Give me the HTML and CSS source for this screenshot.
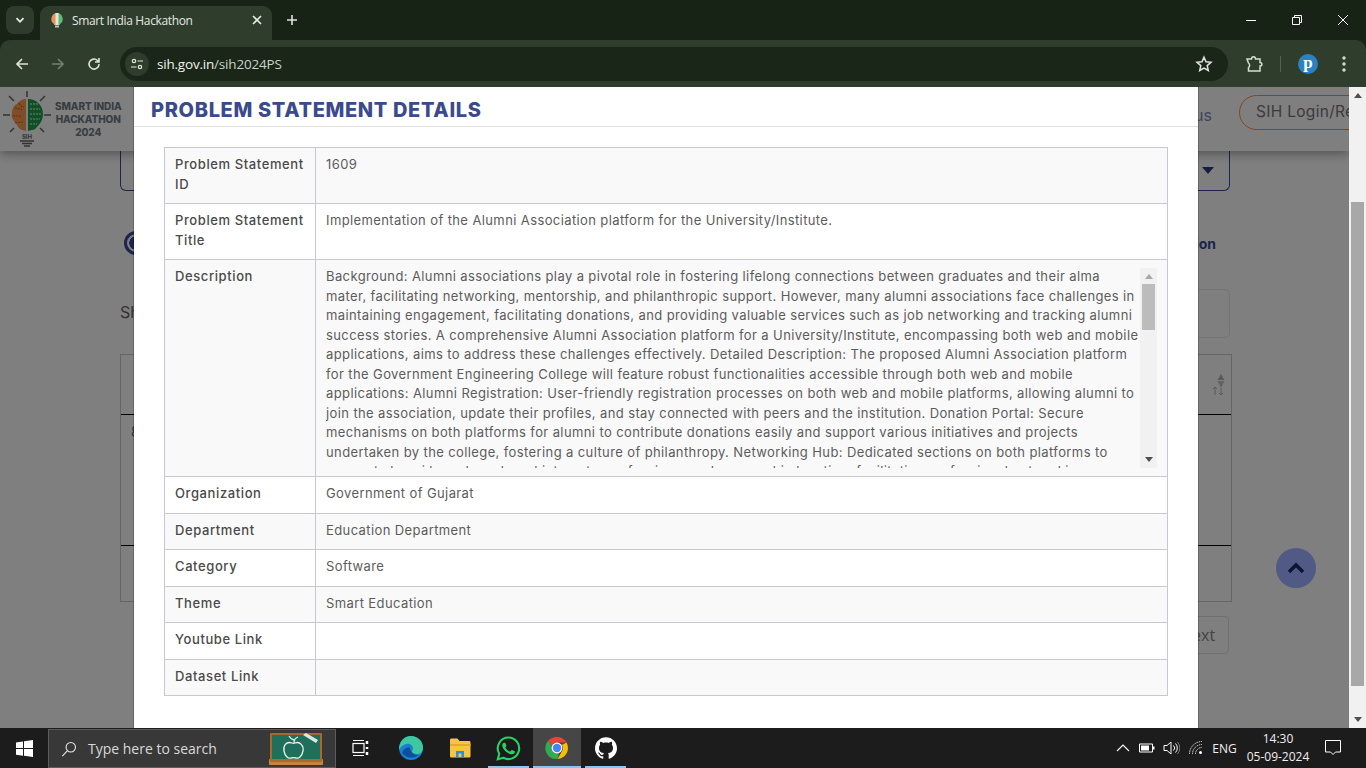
FILE: index.html
```html
<!DOCTYPE html>
<html lang="en">
<head>
    <meta charset="UTF-8">
    <meta name="viewport" content="width=device-width, initial-scale=1.0">
    <title>Smart India Hackathon</title>
    <link rel="stylesheet" href="styles.css">
</head>
<body>
    <div class="tabstrip">
        <div class="tab-search">
            <svg width="12" height="12" viewBox="0 0 12 12"><path d="M2.5 4.2 6 7.8l3.5-3.6" fill="none" stroke="#e6ece4" stroke-width="1.8"/></svg>
        </div>
        <div class="tab">
            <svg class="favicon" width="14" height="16" viewBox="0 0 14 16">
                <path d="M7 1a6 6 0 0 0-3 11v1h3z" fill="#e8925a"/>
                <path d="M7 1a6 6 0 0 1 3 11v1H7z" fill="#63b878"/>
                <rect x="5.5" y="1" width="3" height="12" fill="#dfe8dc"/>
                <rect x="5" y="13.5" width="4" height="2" fill="#b9c4b6"/>
            </svg>
            <span class="tab-title">Smart India Hackathon</span>
            <svg class="tab-close" width="10" height="10" viewBox="0 0 10 10"><path d="M1 1l8 8M9 1l-8 8" stroke="#e6ece4" stroke-width="1.6"/></svg>
        </div>
        <svg class="new-tab" width="12" height="12" viewBox="0 0 12 12"><path d="M6 1v10M1 6h10" stroke="#dfe6dc" stroke-width="1.6"/></svg>
        <div class="win-controls">
            <svg width="12" height="12" viewBox="0 0 12 12"><path d="M1 6.5h10" stroke="#fff" stroke-width="1"/></svg>
            <svg width="12" height="12" viewBox="0 0 12 12"><path d="M3.5 3V1.5h7v7H9M1.5 3.5h7v7h-7z" fill="none" stroke="#fff" stroke-width="1"/></svg>
            <svg width="12" height="12" viewBox="0 0 12 12"><path d="M1 1l10 10M11 1 1 11" stroke="#fff" stroke-width="1"/></svg>
        </div>
    </div>

    <div class="toolbar">
        <svg class="nav-icon" width="16" height="16" viewBox="0 0 16 16"><path d="M14 8H3M8 3 3 8l5 5" fill="none" stroke="#dbe3d8" stroke-width="1.7"/></svg>
        <svg class="nav-icon" width="16" height="16" viewBox="0 0 16 16"><path d="M2 8h11M8 3l5 5-5 5" fill="none" stroke="#74806f" stroke-width="1.7"/></svg>
        <svg class="nav-icon" width="16" height="16" viewBox="0 0 16 16"><path d="M13 8a5 5 0 1 1-1.500-3.500L13 6M13 2v4H9" fill="none" stroke="#dbe3d8" stroke-width="1.6"/></svg>
        <div class="omnibox">
            <div class="site-info">
                <svg width="14" height="14" viewBox="0 0 14 14" fill="none" stroke="#dfe6dc" stroke-width="1.2"><circle cx="4" cy="4" r="1.7"/><path d="M7.5 4H13M1 10h5.5"/><circle cx="10" cy="10" r="1.7"/></svg>
            </div>
            <span class="url"><span class="url-host">sih.gov.in</span>/sih2024PS</span>
            <svg class="star" width="18" height="18" viewBox="0 0 18 18"><path d="m9 2.2 2 4.600 5 .5-3.800 3.300 1.100 4.900L9 13l-4.300 2.500 1.100-4.900L2 7.300l5-.5z" fill="none" stroke="#dfe6dc" stroke-width="1.5"/></svg>
        </div>
        <svg class="ext-icon" width="18" height="18" viewBox="0 0 18 18"><path d="M2 4h4.500c0-3 4-3 4 0H15v3.500c2.500 0 2.500 3.500 0 3.500v5H3.500v-3.500c1.500-1 1.500-3.500 0-4.500L2 4z" fill="none" stroke="#d3e0cd" stroke-width="1.5"/></svg>
        <div class="tool-divider"></div>
        <div class="avatar">p</div>
        <svg class="menu-dots" width="4" height="16" viewBox="0 0 4 16" fill="#d3e0cd"><circle cx="2" cy="2" r="1.7"/><circle cx="2" cy="8" r="1.7"/><circle cx="2" cy="14" r="1.7"/></svg>
    </div>

    <div class="viewport">
        <div class="page">
            <header class="site-header">
                <div class="logo">
                    <svg width="48" height="58" viewBox="0 0 48 58">
                        <path d="M24 1v6M6 6l5 5M42 6l-5 5M0 25h7M41 25h7M7 42l4-4M41 42l-4-4" stroke="#666" stroke-width="1.5"/>
                        <path d="M23 9c-4 0-7 2-9 5-3 1-5 5-5 9-1 4 1 8 4 10 1 3 3 6 6 7l4 1z" fill="#ff9c50"/>
                        <path d="M12 18c3 1 5 0 7 2M10 26c4-1 6 1 9 0M12 33c3-1 5 0 8-1M16 13c1 3 3 4 5 4" fill="none" stroke="#c46a28" stroke-width="1.2" stroke-dasharray="2 1"/>
                        <path d="M25 9c8 0 15 6 15 15 0 7-4 11-7 14-1 1-2 2-4 2l-4 1z" fill="#21a04c"/>
                        <path d="M27 14h8M27 19h10M27 24h11M27 29h10M27 34h7" stroke="#a6e2b6" stroke-width="1.5" stroke-dasharray="2 1"/>
                        <text x="24" y="49" class="logo-sih">SIH</text>
                        <path d="M17 51h14M19 53.500h10M21 56h6" stroke="#666" stroke-width="1.5"/>
                    </svg>
                    <div class="logo-text">SMART INDIA<br>HACKATHON<br>2024</div>
                </div>
                <nav class="site-nav">
                    <a class="nav-link" href="#">Status</a>
                    <a class="login-btn" href="#">SIH Login/Register</a>
                </nav>
            </header>

            <div class="content">
                <div class="select-box"><span class="select-arrow"></span></div>
                <div class="section-row">
                    <span class="ring"></span>
                    <span class="section-link">Download Problem Statement Description</span>
                </div>
                <div class="show-row">
                    <span class="show-label">Show 10 entries</span>
                    <div class="search-input"></div>
                </div>
                <div class="ps-table">
                    <div class="ps-head">
                        <svg class="sort-icon" width="14" height="24" viewBox="0 0 14 24">
                            <path d="M3 22V14M1 16l2-2 2 2" fill="none" stroke="#b4b4b4" stroke-width="1"/>
                            <path d="M9 1 5.500 7h7z" fill="#b4b4b4"/>
                            <path d="M5.500 8h7L9 15z" fill="#c4c4c4"/>
                            <path d="M9 15v7M7 20l2 2 2-2" fill="none" stroke="#b4b4b4" stroke-width="1"/>
                        </svg>
                    </div>
                    <div class="ps-row">8</div>
                    <div class="ps-foot"></div>
                </div>
                <div class="pager"><a class="next-btn" href="#">Next</a></div>
            </div>

            <div class="backdrop"></div>
            <a class="to-top" href="#">
                <svg width="20" height="14" viewBox="0 0 20 14"><path d="M3 11 10 4l7 7" fill="none" stroke="#0b1536" stroke-width="3.5"/></svg>
            </a>

            <div class="modal">
                <div class="modal-header">
                    <h2 class="modal-title">PROBLEM STATEMENT DETAILS</h2>
                </div>
                <div class="modal-body">
                    <table class="details">
                        <tr>
                            <th>Problem Statement ID</th>
                            <td>1609</td>
                        </tr>
                        <tr>
                            <th>Problem Statement Title</th>
                            <td>Implementation of the Alumni Association platform for the University/Institute.</td>
                        </tr>
                        <tr>
                            <th>Description</th>
                            <td class="desc-cell">
                                <div class="desc-box">
                                    <div class="desc-text">
                                        Background: Alumni associations play a pivotal role in fostering lifelong connections between graduates and their alma<br>
                                        mater, facilitating networking, mentorship, and philanthropic support. However, many alumni associations face challenges in<br>
                                        maintaining engagement, facilitating donations, and providing valuable services such as job networking and tracking alumni<br>
                                        success stories. A comprehensive Alumni Association platform for a University/Institute, encompassing both web and mobile<br>
                                        applications, aims to address these challenges effectively. Detailed Description: The proposed Alumni Association platform<br>
                                        for the Government Engineering College will feature robust functionalities accessible through both web and mobile<br>
                                        applications: Alumni Registration: User-friendly registration processes on both web and mobile platforms, allowing alumni to<br>
                                        join the association, update their profiles, and stay connected with peers and the institution. Donation Portal: Secure<br>
                                        mechanisms on both platforms for alumni to contribute donations easily and support various initiatives and projects<br>
                                        undertaken by the college, fostering a culture of philanthropy. Networking Hub: Dedicated sections on both platforms to<br>
                                        connect alumni based on shared interests, professions, and geographic location, facilitating professional networking
                                    </div>
                                    <div class="desc-scroll">
                                        <span class="arrow-up"></span>
                                        <span class="desc-thumb"></span>
                                        <span class="arrow-down"></span>
                                    </div>
                                </div>
                            </td>
                        </tr>
                        <tr>
                            <th>Organization</th>
                            <td>Government of Gujarat</td>
                        </tr>
                        <tr>
                            <th>Department</th>
                            <td>Education Department</td>
                        </tr>
                        <tr>
                            <th>Category</th>
                            <td>Software</td>
                        </tr>
                        <tr>
                            <th>Theme</th>
                            <td>Smart Education</td>
                        </tr>
                        <tr>
                            <th>Youtube Link</th>
                            <td></td>
                        </tr>
                        <tr>
                            <th>Dataset Link</th>
                            <td></td>
                        </tr>
                    </table>
                </div>
            </div>
        </div>

        <div class="page-scroll">
            <span class="arrow-up dark"></span>
            <span class="page-thumb"></span>
            <span class="arrow-down dark"></span>
        </div>
    </div>

    <div class="taskbar">
        <div class="start">
            <svg width="17" height="17" viewBox="0 0 17 17" fill="#fff"><path d="M0 2.400 7 1.400v6.700H0zM8 1.300 17 0v8.100H8zM0 9h7v6.700L0 14.700zM8 9h9v8l-9-1.200z"/></svg>
        </div>
        <div class="search-box">
            <svg width="16" height="16" viewBox="0 0 18 18" fill="none" stroke="#e8e8e8" stroke-width="1.2"><circle cx="11" cy="7" r="5.300"/><path d="M7 11 1.500 17"/></svg>
            <span class="search-text">Type here to search</span>
            <svg class="board" width="56" height="34" viewBox="0 0 56 34">
                <rect x="1" y="27" width="54" height="6" fill="#c8843c" rx="1"/>
                <rect x="2" y="1" width="52" height="29" fill="#a86a2c" rx="1"/>
                <rect x="4" y="3" width="48" height="24" fill="#1f6f5c"/>
                <path d="M24 11c-6-2-9 3-8 8 1 5 4 8 7 7 2-.5 3-.5 5 0 3 1 6-2 7-7 1-5-3-10-8-8-1 .4-2 .4-3 0zM26 11c0-3 1-5 4-6M26 8c-2-.5-4-2-5-4" fill="none" stroke="#e8efe6" stroke-width="1.3"/>
                <path d="M35 3l3-2 12 7-2 3z" fill="#dfe6e2"/>
            </svg>
        </div>
        <div class="task-item task-view">
            <svg width="18" height="18" viewBox="0 0 18 18" fill="none" stroke="#fff" stroke-width="1.2"><path d="M1 1.500h11M1 16.500h11"/><rect x="1" y="4.500" width="11" height="9"/><path d="M15 2v3M15 8v2M15 13v3" stroke-width="2.5"/></svg>
        </div>
        <div class="task-item">
            <svg width="24" height="24" viewBox="0 0 24 24">
                <circle cx="12" cy="12" r="12" fill="#1a7fd0"/>
                <path d="M12 0a12 12 0 0 1 12 12c0 4-3 6-6 6-3 0-5-1-5-3 0-1 1-1 1-2.500C14 9 10 7 7 8c-3 1-6 3-7 6C0 6 5 0 12 0z" fill="#3ec8a0"/>
                <path d="M3 17c2-5 6-7 8-5 0 3 3 7 7 7 1 0 2 0 3-1a12 12 0 0 1-18-1z" fill="#0c4f9c"/>
            </svg>
        </div>
        <div class="task-item">
            <svg width="22" height="20" viewBox="0 0 22 20">
                <path d="M1 2c0-1 .5-1.500 1.500-1.500h6L10.500 3H20c1 0 1.500.5 1.500 1.500V18c0 1-.5 1.500-1.500 1.500H2.500C1.500 19.500 1 19 1 18z" fill="#f6c544"/>
                <path d="M1 6h20.500v2H1z" fill="#e8a82c"/>
                <path d="M7 19.500V13h8v6.500h-2.500V15.500h-3v4z" fill="#2a8ed8"/>
            </svg>
        </div>
        <div class="task-item open">
            <svg width="25" height="25" viewBox="0 0 24 24" fill="#25d366">
                <path d="M17.472 14.382c-.297-.149-1.758-.867-2.030-.967-.273-.099-.471-.148-.670.150-.197.297-.767.966-.940 1.164-.173.199-.347.223-.644.075-.297-.150-1.255-.463-2.390-1.475-.883-.788-1.480-1.761-1.653-2.059-.173-.297-.018-.458.130-.606.134-.133.298-.347.446-.520.149-.174.198-.298.298-.497.099-.198.050-.371-.025-.520-.075-.149-.669-1.612-.916-2.207-.242-.579-.487-.500-.669-.510-.173-.008-.371-.010-.570-.010-.198 0-.520.074-.792.372-.272.297-1.040 1.016-1.040 2.479 0 1.462 1.065 2.875 1.213 3.074.149.198 2.096 3.200 5.077 4.487.709.306 1.262.489 1.694.625.712.227 1.360.195 1.871.118.571-.085 1.758-.719 2.006-1.413.248-.694.248-1.289.173-1.413-.074-.124-.272-.198-.570-.347"/>
                <path d="M12 1.500a10.300 10.300 0 0 0-8.900 15.500L1.700 22.300l5.400-1.400A10.300 10.300 0 1 0 12 1.500z" fill="none" stroke="#25d366" stroke-width="2"/>
            </svg>
        </div>
        <div class="task-item active">
            <svg width="24" height="24" viewBox="0 0 24 24">
                <path d="M12 1a11 11 0 0 1 9.500 5.500H12a5.500 5.500 0 0 0-5.200 3.700L3.400 4.500A11 11 0 0 1 12 1z" fill="#ea4335"/>
                <path d="M21.500 6.500A11 11 0 0 1 12.500 23l4.200-7.300A5.500 5.500 0 0 0 16.800 9z" fill="#fbbc04"/>
                <path d="M12.500 23A11 11 0 0 1 3.400 4.500l4.200 7.300a5.500 5.500 0 0 0 6.300 5.500z" fill="#34a853"/>
                <circle cx="12" cy="12" r="5.400" fill="#fff"/>
                <circle cx="12" cy="12" r="4.200" fill="#4285f4"/>
            </svg>
        </div>
        <div class="task-item open">
            <svg width="22" height="22" viewBox="0 0 24 24" fill="#fff"><path d="M12 .297c-6.630 0-12 5.373-12 12 0 5.303 3.438 9.800 8.205 11.385.6.113.82-.258.82-.577 0-.285-.01-1.040-.015-2.040-3.338.724-4.042-1.610-4.042-1.610C4.422 18.070 3.633 17.700 3.633 17.700c-1.087-.744.084-.729.084-.729 1.205.084 1.838 1.236 1.838 1.236 1.070 1.835 2.809 1.305 3.495.998.108-.776.417-1.305.760-1.605-2.665-.3-5.466-1.332-5.466-5.930 0-1.310.465-2.380 1.235-3.220-.135-.303-.54-1.523.105-3.176 0 0 1.005-.322 3.300 1.230.96-.267 1.980-.399 3-.405 1.020.006 2.040.138 3 .405 2.280-1.552 3.285-1.230 3.285-1.230.645 1.653.24 2.873.12 3.176.765.840 1.230 1.910 1.230 3.220 0 4.610-2.805 5.625-5.475 5.920.42.360.81 1.096.81 2.220 0 1.606-.015 2.896-.015 3.286 0 .315.21.690.825.570C20.565 22.092 24 17.592 24 12.297c0-6.627-5.373-12-12-12"/></svg>
        </div>

        <div class="tray">
            <div class="tray-item w24"><svg width="14" height="8" viewBox="0 0 14 8"><path d="M1 7l6-6 6 6" fill="none" stroke="#fff" stroke-width="1.1"/></svg></div>
            <div class="tray-item w24"><svg width="16" height="10" viewBox="0 0 16 10"><path d="M.5 1h13v8H.5z" fill="none" stroke="#fff"/><rect x="2" y="2.500" width="8" height="5" fill="#fff"/><rect x="14" y="3.500" width="1.500" height="3" fill="#fff"/></svg></div>
            <div class="tray-item w24"><svg width="17" height="14" viewBox="0 0 17 14" fill="none" stroke="#fff"><path d="M1 4.500h3L8 1v12L4 9.500H1z"/><path d="M10.500 4.500a3.500 3.500 0 0 1 0 5M12.500 2.500a6.500 6.500 0 0 1 0 9"/><path d="M14.500 1a9 9 0 0 1 0 12" stroke="#777"/></svg></div>
            <div class="tray-item w26"><svg width="14" height="14" viewBox="0 0 14 14" fill="none" stroke="#ddd"><path d="M.5 13A12.500 12.500 0 0 1 13 .5M3.500 13A9.500 9.500 0 0 1 13 3.500M6.500 13A6.500 6.500 0 0 1 13 6.500" stroke-dasharray="1.5 .8"/><circle cx="11.500" cy="11.500" r="1.5" fill="#fff" stroke="none"/></svg></div>
            <div class="tray-lang">ENG</div>
            <div class="clock">14:30<br>05-09-2024</div>
            <div class="tray-item w34"><svg width="16" height="16" viewBox="0 0 16 16"><path d="M.5.500h15v11.500h-5L8 14.500 5.500 12h-5z" fill="none" stroke="#fff"/></svg></div>
        </div>
    </div>
</body>
</html>
```

FILE: styles.css
```css
* {
    margin: 0;
    padding: 0;
    box-sizing: border-box;
}

html, body {
    width: 1366px;
    height: 768px;
    overflow: hidden;
}

body {
    font-family: Inter, "Liberation Sans", sans-serif;
    background: #16241a;
    display: flex;
    flex-direction: column;
}

a {
    text-decoration: none;
    color: inherit;
}

/* browser frame */
.tabstrip {
    height: 40px;
    background: #172415;
    display: flex;
    align-items: flex-end;
    padding-left: 6px;
    flex-shrink: 0;
}

.tab-search {
    width: 28px;
    height: 28px;
    margin-bottom: 6px;
    border-radius: 8px;
    background: #2e3c2c;
    display: flex;
    align-items: center;
    justify-content: center;
}

.tab {
    width: 232px;
    height: 34px;
    margin-left: 6px;
    background: #2f3d2d;
    border-radius: 9px 9px 0 0;
    display: flex;
    align-items: center;
    padding: 0 10px 6px 10px;
}

.tab-title {
    font-family: "Open Sans", sans-serif;
    font-size: 12px;
    letter-spacing: -0.35px;
    color: #e3e8e1;
    margin-left: 8px;
    flex: 1;
}

.new-tab {
    margin: 0 0 14px 14px;
}

.win-controls {
    margin-left: auto;
    display: flex;
    gap: 34px;
    padding: 0 17px 14px 0;
}

.win-controls svg {
    display: block;
}

.toolbar {
    height: 47px;
    background: #2f3d2d;
    border-radius: 10px 10px 0 0;
    display: flex;
    align-items: center;
    padding: 0 14px;
    flex-shrink: 0;
}

.nav-icon {
    margin-right: 20px;
}

.omnibox {
    width: 1108px;
    height: 34px;
    margin-left: -2px;
    border-radius: 17px;
    background: #1a2618;
    display: flex;
    align-items: center;
    padding: 0 15px 0 5px;
}

.site-info {
    width: 24px;
    height: 24px;
    border-radius: 50%;
    background: #2f3d2d;
    display: flex;
    align-items: center;
    justify-content: center;
}

.url {
    font-family: "Open Sans", sans-serif;
    font-size: 13.5px;
    letter-spacing: -0.2px;
    color: #c9d2c6;
    margin-left: 8px;
    flex: 1;
}

.url-host {
    color: #f0f4ee;
}

.ext-icon {
    margin-left: 17px;
}

.tool-divider {
    width: 1px;
    height: 16px;
    background: #56644f;
    margin-left: 17px;
}

.avatar {
    width: 20px;
    height: 20px;
    margin-left: 17px;
    border-radius: 50%;
    background: #2a82c2;
    color: #fff;
    font-family: "Liberation Serif", serif;
    font-weight: bold;
    font-size: 17px;
    line-height: 17px;
    text-align: center;
}

.menu-dots {
    margin-left: 24px;
}

/* page area */
.viewport {
    height: 641px;
    display: flex;
    flex-shrink: 0;
}

.page {
    position: relative;
    width: 1349px;
    height: 641px;
    background: #fff;
    overflow: hidden;
}

.site-header {
    height: 64px;
    background: #fff;
    display: flex;
    align-items: center;
    justify-content: space-between;
    box-shadow: 0 3px 10px rgba(0,0,0,0.35);
    position: relative;
}

.logo {
    display: flex;
    align-items: center;
    padding-left: 3px;
    gap: 4px;
}

.logo-sih {
    font-size: 6px;
    font-weight: 700;
    text-anchor: middle;
    fill: #666;
}

.logo-text {
    font-size: 10px;
    font-weight: 800;
    letter-spacing: -0.1px;
    line-height: 13px;
    text-align: center;
    color: #6f7c86;
    white-space: nowrap;
}

.site-nav {
    display: flex;
    align-items: center;
    gap: 27px;
    margin-right: -78px;
    margin-top: -14px;
}

.nav-link {
    font-size: 16px;
    color: #7a8ac0;
    margin-top: 6px;
}

.login-btn {
    width: 188px;
    height: 35px;
    border: 1.5px solid #ff8f40;
    border-radius: 18px;
    font-size: 15.5px;
    letter-spacing: 0.3px;
    line-height: 32px;
    padding-left: 16px;
    color: #777;
    white-space: nowrap;
}

.content {
    padding-left: 120px;
    width: 1232px;
}

.select-box {
    width: 1110px;
    height: 40px;
    border: 1px solid #3a4a9c;
    border-top: none;
    border-radius: 0 0 6px 6px;
    display: flex;
    align-items: center;
    justify-content: flex-end;
    padding-right: 15px;
}

.select-arrow {
    border-left: 6px solid transparent;
    border-right: 6px solid transparent;
    border-top: 7px solid #2a3a8c;
}

.section-row {
    height: 30px;
    margin-top: 37px;
    display: flex;
    align-items: center;
    justify-content: space-between;
    width: 1096px;
}

.ring {
    width: 24px;
    height: 24px;
    margin-left: 4px;
    border: 3px solid #3a4a9c;
    border-radius: 50%;
    background: radial-gradient(circle, #3a4a9c 0 6.5px, transparent 7px);
}

.section-link {
    font-size: 14px;
    font-weight: 700;
    color: #3a4a9c;
    white-space: nowrap;
}

.show-row {
    height: 49px;
    width: 1110px;
    margin-top: 31px;
    display: flex;
    align-items: center;
    justify-content: space-between;
}

.show-label {
    font-size: 16px;
    color: #666;
    margin-bottom: 3px;
}

.search-input {
    width: 220px;
    height: 49px;
    border: 1px solid #e6e6e6;
    border-radius: 5px;
}

.ps-table {
    height: 248px;
    margin-top: 16px;
    border: 1px solid #ccc;
    display: flex;
    flex-direction: column;
}

.ps-head {
    height: 60px;
    border-bottom: 1px solid #000;
    display: flex;
    align-items: center;
    justify-content: flex-end;
    padding-right: 5px;
}

.ps-row {
    height: 131px;
    border-bottom: 1px solid #000;
    padding: 8px 10px;
    font-size: 14px;
    color: #666;
}

.pager {
    margin-top: 14px;
    width: 1109px;
    display: flex;
    justify-content: flex-end;
}

.next-btn {
    width: 80px;
    height: 38px;
    border: 1px solid #e0e0e0;
    border-radius: 4px;
    padding-left: 30px;
    font-family: "Open Sans", sans-serif;
    font-size: 16px;
    line-height: 36px;
    color: #888;
}

.backdrop {
    position: absolute;
    inset: 0;
    background: rgba(0,0,0,0.5);
}

.to-top {
    position: absolute;
    left: 1276px;
    top: 461px;
    width: 40px;
    height: 40px;
    border-radius: 50%;
    background: #505a85;
    display: flex;
    align-items: center;
    justify-content: center;
}

/* modal */
.modal {
    position: absolute;
    left: 134px;
    top: 0;
    width: 1064px;
    height: 641px;
    background: #fff;
    box-shadow: 0 0 0 1px rgba(0,0,0,0.2);
    overflow: hidden;
}

.modal-header {
    height: 40px;
    padding: 6px 0 0 17px;
    border-bottom: 1px solid #dee2e6;
    display: flex;
    align-items: center;
}

.modal-title {
    font-size: 20px;
    font-weight: 800;
    color: #3a4a8c;
    letter-spacing: 0.65px;
}

.modal-body {
    padding: 20px 30px 0;
}

.details {
    width: 1004px;
    table-layout: fixed;
    border-collapse: collapse;
    font-size: 13px;
    line-height: 19.5px;
}

.details th, .details td {
    border: 1px solid #c6c9d3;
    padding: 7px 10px 9px;
    vertical-align: top;
    text-align: left;
    height: 36.5px;
}

.details th {
    width: 151px;
    font-weight: 500;
    color: #4a4a4a;
    letter-spacing: 0.6px;
}

.details td {
    font-weight: 400;
    color: #5c5c5c;
    letter-spacing: 0.39px;
}

.details tr:nth-child(odd) {
    background: #f9f9f9;
}

.details .desc-cell {
    padding: 8px 10px;
}

.desc-box {
    height: 200px;
    display: flex;
    overflow: hidden;
}

.desc-text {
    width: 814px;
    margin-top: -1px;
    white-space: nowrap;
    overflow: hidden;
}

.desc-scroll {
    width: 17px;
    background: #f1f1f1;
    display: flex;
    flex-direction: column;
    align-items: center;
}

.desc-thumb {
    display: block;
    width: 13px;
    height: 46px;
    margin-top: 5px;
    background: #bcbcbc;
}

.arrow-up, .arrow-down {
    display: block;
    width: 0;
    height: 0;
    border-left: 4px solid transparent;
    border-right: 4px solid transparent;
}

.arrow-up {
    border-bottom: 5px solid #a8a8a8;
    margin-top: 6px;
}

.arrow-down {
    border-top: 5px solid #505050;
    margin-top: auto;
    margin-bottom: 6px;
}

.page-scroll {
    width: 17px;
    background: #f1f1f1;
    display: flex;
    flex-direction: column;
    align-items: center;
}

.page-thumb {
    display: block;
    width: 13px;
    height: 484px;
    margin-top: 104px;
    background: #a8a8a8;
}

.arrow-up.dark {
    border-bottom-color: #505050;
}

/* taskbar */
.taskbar {
    height: 40px;
    background: #1c1c1c;
    display: flex;
    flex-shrink: 0;
    align-items: stretch;
}

.start {
    width: 48px;
    display: flex;
    align-items: center;
    justify-content: center;
}

.search-box {
    width: 288px;
    height: 39px;
    margin-top: 1px;
    background: #383838;
    border: 1px solid #5c5c5c;
    display: flex;
    align-items: center;
    padding-left: 12px;
    position: relative;
}

.search-text {
    font-family: "Open Sans", sans-serif;
    font-size: 14px;
    color: #d8d8d8;
    margin-left: 11px;
}

.board {
    position: absolute;
    left: 219px;
    top: 2px;
}

.task-item {
    width: 48.7px;
    display: flex;
    align-items: center;
    justify-content: center;
    position: relative;
}

.task-view {
    width: 50.7px;
}

.task-item.active {
    background: #464646;
}

.task-item.active::after, .task-item.open::after {
    content: "";
    position: absolute;
    left: 4px;
    right: 4px;
    bottom: 0;
    height: 2px;
    background: #8cc4ee;
}

.task-item.active::after {
    left: 0;
    right: 0;
}

.tray {
    margin-left: auto;
    display: flex;
    align-items: center;
    padding-right: 16px;
    height: 40px;
}

.tray-item {
    display: flex;
    align-items: center;
    justify-content: center;
}

.w24 { width: 24px; }
.w26 { width: 26px; }
.w34 { width: 34px; }

.tray-lang {
    width: 31px;
    text-align: center;
    font-family: "Open Sans", sans-serif;
    font-size: 12px;
    color: #eee;
}

.clock {
    width: 76px;
    text-align: center;
    font-family: "Open Sans", sans-serif;
    font-size: 12px;
    line-height: 18px;
    color: #eee;
}
```
